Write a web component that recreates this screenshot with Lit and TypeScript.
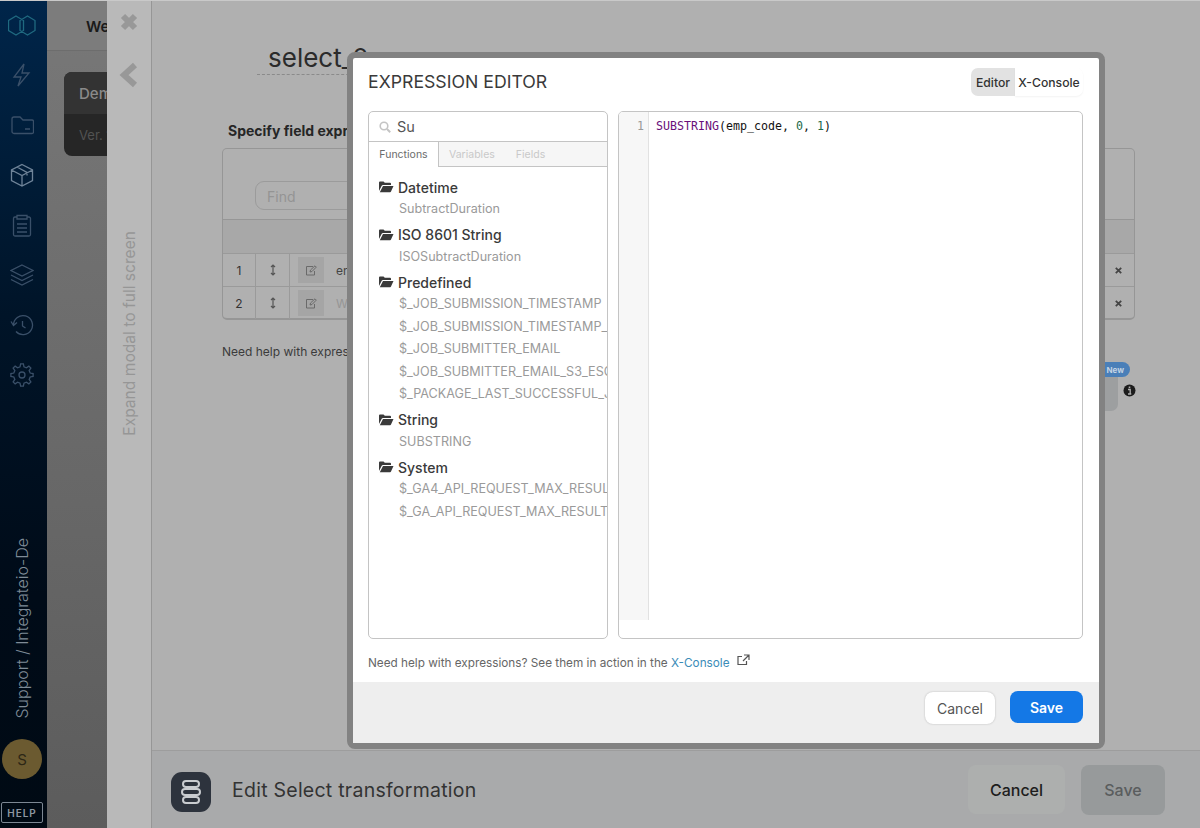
import { LitElement, html, css, svg } from "lit";
import { customElement } from "lit/decorators.js";

const groups = [
  { name: "Datetime", items: ["SubtractDuration"] },
  { name: "ISO 8601 String", items: ["ISOSubtractDuration"] },
  { name: "Predefined", items: ["$_JOB_SUBMISSION_TIMESTAMP", "$_JOB_SUBMISSION_TIMESTAMP_UTC", "$_JOB_SUBMITTER_EMAIL", "$_JOB_SUBMITTER_EMAIL_S3_ESCAPED", "$_PACKAGE_LAST_SUCCESSFUL_JOB"] },
  { name: "String", items: ["SUBSTRING"] },
  { name: "System", items: ["$_GA4_API_REQUEST_MAX_RESULTS", "$_GA_API_REQUEST_MAX_RESULTS"] },
];

function gearPath(): string {
  const pts: string[] = [];
  const teeth = 8;
  for (let i = 0; i < teeth; i++) {
    const a = (i * 2 * Math.PI) / teeth - Math.PI / 2;
    const step = (2 * Math.PI) / teeth;
    const at = (r: number, d: number) => `${(12 + r * Math.cos(a + d)).toFixed(2)} ${(12 + r * Math.sin(a + d)).toFixed(2)}`;
    pts.push(`${i === 0 ? "M" : "L"}${at(8.4, -step * 0.3)}`);
    pts.push(`L${at(11.2, -step * 0.16)}`);
    pts.push(`L${at(11.2, step * 0.16)}`);
    pts.push(`L${at(8.4, step * 0.3)}`);
  }
  return pts.join("") + "Z";
}

const navIcons = [
  svg`<path d="M8 3l7.500 4.500v10L8 22l-7.500-4.500v-10z M19.500 3 27 7.500v10L19.500 22 12 17.500v-10z" />`,
  svg`<path d="M14 1 4 14h7l-3 9 11-13h-7z" />`,
  svg`<path d="M2 6a2 2 0 0 1 2-2h6l3 3h9a1.500 1.500 0 0 1 1.500 1.500V19a1.500 1.500 0 0 1-1.500 1.500H4A2 2 0 0 1 2 18.500z M15 16h5" />`,
  svg`<path d="M12 1.500 22.500 7v10.500L12 23 1.500 17.500V7z M1.500 7 12 12.500 22.500 7 M12 12.500V23 M7 4l10 5.500v3" />`,
  svg`<path d="M7 4H5a1.500 1.500 0 0 0-1.500 1.500v16A1.500 1.500 0 0 0 5 23h14a1.500 1.500 0 0 0 1.500-1.500v-16A1.500 1.500 0 0 0 19 4h-2 M7 2.500h10V6H7z M7 11h10 M7 15h10 M7 19h10" />`,
  svg`<path d="M12 2 23 7.500 12 13 1 7.500z M1 12l11 5.500L23 12 M1 16.500 12 22l11-5.500" />`,
  svg`<path d="M3.500 12A9.500 9.500 0 1 1 6 18.500 M1 8.500l2.500 4 3.500-3 M12.500 8v5l3 2" />`,
  svg`<path d=${gearPath()} /><circle cx="12" cy="12" r="3" />`,
];

@customElement("app-root")
export class AppRoot extends LitElement {
  static styles = css`
    :host { display: block; position: relative; width: 1200px; height: 828px; overflow: hidden; font-family: Inter, "Liberation Sans", sans-serif; color: #333; background: #c9c9c9; }
    svg { display: block; }
    .shell { display: flex; height: 827px; margin-top: 1px; }
    .nav { width: 47px; flex: none; background: linear-gradient(#00254a 0%, #00203f 12%, #001428 38%, #000b18 72%, #000a14 100%); display: flex; flex-direction: column; align-items: center; padding: 12px 3px 0 0; box-sizing: border-box; }
    .nav-ic { height: 24px; margin-bottom: 26px; color: #3a5069; }
    .nav-ic svg { fill: none; stroke: currentColor; stroke-width: 1.300; }
    .nav-ic.logo { color: #1f6a80; }
    .nav-ic.box { color: #6f8499; }
    .spacer { flex: 1; }
    .org { writing-mode: vertical-rl; transform: rotate(180deg); font-size: 16px; color: #7f8b97; white-space: nowrap; margin-bottom: 21px; font-weight: 300; }
    .avatar { width: 40px; height: 40px; border-radius: 50%; background: #6b5a30; color: #2d2716; display: flex; align-items: center; justify-content: center; font-size: 15px; margin-bottom: 23px; }
    .help { width: 42px; height: 21px; box-sizing: border-box; border: 1px solid #7c8793; border-radius: 2px; color: #8d97a2; font-size: 10px; font-weight: 600; letter-spacing: 1px; display: flex; align-items: center; justify-content: center; margin-bottom: 5px; }
    .page { flex: 1; background: linear-gradient(#787878 0%, #5c5c5c 100%); }
    .topbar { height: 50px; background: #7c7c7c; border-bottom: 1px solid #6d6d6d; font-size: 15px; font-weight: 600; color: #1a1a1a; padding: 16px 0 0 39px; box-sizing: border-box; overflow: hidden; white-space: nowrap; }
    .card { margin: 21px 0 0 17px; width: 120px; height: 84px; border-radius: 8px; overflow: hidden; background: #262626; }
    .card-h { height: 42px; background: #333; color: #8a8a8a; font-size: 15px; font-weight: 500; padding: 12px 0 0 15px; box-sizing: border-box; }
    .card-b { color: #525252; font-size: 13px; padding: 13px 0 0 15px; }

    .panel { position: absolute; left: 107px; top: 1px; right: 0; bottom: 0; display: flex; background: #b0b0b0; }
    .rail { width: 45px; flex: none; box-sizing: border-box; background: #b9b9b9; border-right: 1px solid #969696; display: flex; flex-direction: column; align-items: center; color: #989898; }
    .rail-x { margin-top: 11px; }
    .rail-ch { margin-top: 30px; }
    .rail-t { writing-mode: vertical-rl; transform: rotate(180deg); font-size: 15.600px; margin-top: 143px; white-space: nowrap; color: #969696; }
    .content { flex: 1; display: flex; flex-direction: column; min-width: 0; }
    .main { flex: 1; padding: 0 65px 0 70px; }
    .name { margin: 41px 0 0 35px; width: 200px; font-size: 26px; line-height: 32px; color: #2b2b2b; white-space: nowrap; overflow: hidden; padding-left: 11px; border-bottom: 1px dashed #8a8a8a; height: 32px; }
    .spec { margin: 47px 0 0 6px; font-size: 14px; font-weight: 700; line-height: 17px; color: #262626; white-space: nowrap; }
    .table { margin-top: 9px; border: 1px solid #969696; border-bottom-width: 2px; border-radius: 5px; height: 172px; box-sizing: border-box; }
    .tools { height: 71px; border-bottom: 1px solid #969696; padding: 32px 0 0 32px; box-sizing: border-box; }
    .find { width: 200px; height: 29px; box-sizing: border-box; border: 1px solid #9b9b9b; border-radius: 9px; padding: 6px 0 0 11px; font-size: 14px; color: #949494; }
    .thead { height: 33px; background: #a8a8a8; }
    .row { height: 33px; display: flex; border-top: 1px solid #9a9a9a; box-sizing: border-box; align-items: stretch; font-size: 12px; }
    .c1 { width: 32px; display: flex; align-items: center; justify-content: center; border-right: 1px solid #9a9a9a; }
    .c2 { width: 33px; display: flex; align-items: center; justify-content: center; border-right: 1px solid #9a9a9a; color: #555; }
    .c3 { flex: 1; display: flex; align-items: center; padding-left: 8px; gap: 12px; color: #444; }
    .c3 .ghost { color: #959595; }
    .ed { width: 26px; height: 26px; background: #a5a5a5; display: flex; align-items: center; justify-content: center; color: #6a6a6a; }
    .c4 { width: 32px; border-left: 1px solid #9a9a9a; display: flex; align-items: center; justify-content: center; color: #444; }
    .needhelp { margin-top: 24px; font-size: 12px; color: #3b3b3b; line-height: 15px; white-space: nowrap; }
    .foot { height: 78px; flex: none; border-top: 1px solid #9d9d9d; background: #a9aaab; display: flex; align-items: center; padding: 0 35px 0 19px; box-sizing: border-box; }
    .foot-ic { width: 40px; height: 40px; border-radius: 11px; background: #2d333d; color: #c9ccd0; display: flex; align-items: center; justify-content: center; margin: 4px 21px 0 0; }
    .foot-t { flex: 1; font-size: 19.500px; color: #333; letter-spacing: .25px; }
    .fbtn { display: flex; align-items: center; justify-content: center; border-radius: 8px; font-size: 16px; font-weight: 500; height: 49px; box-sizing: border-box; }
    .fcancel { width: 97px; background: #adafae; color: #1d1d1d; margin-right: 16px; }
    .fsave { width: 84px; height: 50px; background: #979a9b; color: #5a5d5e; }

    .badge-wrap { position: absolute; left: 1098px; top: 362px; }
    .badge { position: absolute; left: 0; top: 0; width: 32px; height: 15px; border-radius: 8px; background: #4a7fb8; color: #c3d3e3; font-size: 8px; font-weight: 700; display: flex; align-items: center; justify-content: flex-end; padding-right: 6px; box-sizing: border-box; }
    .greybox { position: absolute; left: 0; top: 15px; width: 20px; height: 34px; border-radius: 0 0 7px 0; background: #9d9fa0; }
    .info { position: absolute; left: 25px; top: 22px; color: #1c1c1c; }

    .modal { position: absolute; left: 347px; top: 52px; width: 758px; height: 697px; box-sizing: border-box; border: 6px solid #828282; border-radius: 8px; background: #fff; display: flex; flex-direction: column; }
    .m-head { display: flex; justify-content: space-between; padding: 10px 16px 0 15px; height: 53px; box-sizing: border-box; }
    .m-title { font-size: 17.700px; line-height: 27px; color: #3a3a3a; font-weight: 400; }
    .seg { display: flex; height: 28px; font-size: 12.200px; font-weight: 500; color: #333; }
    .seg-a { width: 44px; background: #e2e2e2; border-radius: 7px 0 0 7px; display: flex; align-items: center; justify-content: center; }
    .seg-b { width: 68px; display: flex; align-items: center; justify-content: center; background: #fff; border-radius: 0 7px 7px 0; box-shadow: 0 1px 2px rgba(0,0,0,.05); }
    .m-body { display: flex; gap: 10px; padding: 0 16px 0 15px; }
    .left { width: 240px; height: 528px; box-sizing: border-box; border: 1px solid #c4c4c4; border-radius: 5px; overflow: hidden; }
    .search { height: 29px; display: flex; align-items: center; padding-left: 10px; gap: 6px; border-bottom: 1px solid #c4c4c4; font-size: 14.500px; color: #555; }
    .search svg { color: #c4c4c4; }
    .tabs { display: flex; height: 25px; background: #f6f6f6; border-bottom: 1px solid #c4c4c4; font-size: 10.500px; color: #c9c9c9; box-sizing: border-box; }
    .tab { display: flex; align-items: center; }
    .tab.on { width: 70px; justify-content: center; background: #fff; color: #6b6b6b; height: 25px; border-right: 1px solid #c4c4c4; box-sizing: border-box; }
    .tab.v { margin-left: 10px; }
    .tab.f { margin-left: 21px; }
    .tree { padding: 9px 0 0 10px; }
    .g { margin-bottom: 3px; }
    .g-h { display: flex; align-items: center; height: 22px; gap: 4px; font-size: 14px; font-weight: 500; color: #3a3a3a; white-space: nowrap; }
    .g-h svg { color: #3a3a3a; }
    .it { height: 22.500px; line-height: 22.500px; padding-left: 20px; font-size: 12.600px; color: #9a9a9a; white-space: nowrap; }
    .right { flex: 1; height: 528px; box-sizing: border-box; border: 1px solid #c4c4c4; border-radius: 5px; display: flex; overflow: hidden; align-items: flex-start; }
    .gutter { width: 30px; height: 508px; background: #f7f7f7; border-right: 1px solid #e2e2e2; font: 11.630px/15px "DejaVu Sans Mono", monospace; color: #999; text-align: right; padding: 7px 4px 0 0; box-sizing: border-box; }
    .code { font: 11.630px/15px "DejaVu Sans Mono", monospace; padding: 7px 0 0 7px; color: #111; white-space: pre; }
    .code .k { color: #6a0f7a; }
    .code .n { color: #1c6b4a; }
    .m-help { display: flex; align-items: center; height: 43px; padding: 5px 0 0 15px; box-sizing: border-box; font-size: 11.750px; color: #666; white-space: pre; }
    .m-help a { color: #3b8cb8; }
    .m-help svg { margin: -6px 0 0 7px; color: #555; }
    .m-foot { flex: 1; background: #eeeeee; display: flex; align-items: flex-start; justify-content: flex-end; padding: 9px 16px 0 0; gap: 15px; }
    .bcancel { width: 70px; height: 32px; margin-top: 1px; border-radius: 8px; background: #fff; box-shadow: 0 0 2px rgba(0,0,0,.25); display: flex; align-items: center; justify-content: center; font-size: 14px; color: #555; }
    .bsave { width: 73px; height: 32px; border-radius: 8px; background: #1478e6; color: #fff; display: flex; align-items: center; justify-content: center; font-size: 14px; font-weight: 600; }
  `;

  folder() {
    return html`<svg width="15" height="12" viewBox="0 0 15 12"><path fill="currentColor" d="M0 1.500A1 1 0 0 1 1 .5h3.500l1.300 1.300H11a1 1 0 0 1 1 1V4H4a1.500 1.500 0 0 0-1.300.8L0 10zM4 5h10.500L12 10.600a1 1 0 0 1-.9.6H.8z"/></svg>`;
  }

  cross(size: number, w: number) {
    return html`<svg width=${size} height=${size} viewBox="0 0 20 20"><path d="M4 4l12 12M16 4 4 16" stroke="currentColor" stroke-width=${w} fill="none"/></svg>`;
  }

  row(n: number, text: string, ghost: boolean) {
    return html`<div class="row">
      <div class="c1">${n}</div>
      <div class="c2"><svg width="8" height="12" viewBox="0 0 8 12"><path d="M4 1v10M2 3l2-2 2 2M2 9l2 2 2-2" stroke="currentColor" fill="none" stroke-width="1.200"/></svg></div>
      <div class="c3"><div class="ed"><svg width="12" height="11" viewBox="0 0 12 11"><path d="M8 1.500H1.500v8.500h8V6M5 7l.5-2L10 .8l1.300 1.300L7 6.500z" stroke="currentColor" fill="none"/></svg></div><span class=${ghost ? "ghost" : ""}>${text}</span></div>
      <div class="c4">${this.cross(9, 4)}</div>
    </div>`;
  }

  render() {
    const cls = ["logo", "", "", "box", "", "", "", ""];
    return html`
      <div class="shell">
        <nav class="nav">
          ${navIcons.map((p, i) => html`<div class="nav-ic ${cls[i]}"><svg width=${i === 0 ? 28 : 24} height="24" viewBox="0 0 ${i === 0 ? 28 : 24} 24">${p}</svg></div>`)}
          <div class="spacer"></div>
          <div class="org">Support / Integrateio-De</div>
          <div class="avatar">S</div>
          <div class="help">HELP</div>
        </nav>
        <div class="page">
          <div class="topbar">We</div>
          <div class="card"><div class="card-h">Dem</div><div class="card-b">Ver. 1</div></div>
        </div>
      </div>

      <div class="panel">
        <aside class="rail">
          <div class="rail-x">${this.cross(20, 6)}</div>
          <svg class="rail-ch" width="20" height="26" viewBox="0 0 20 26"><path d="M16 3 5 13l11 10" stroke="currentColor" stroke-width="6" fill="none"/></svg>
          <div class="rail-t">Expand modal to full screen</div>
        </aside>
        <div class="content">
          <div class="main">
            <div class="name">select_0</div>
            <div class="spec">Specify field expr</div>
            <div class="table">
              <div class="tools"><div class="find">Find</div></div>
              <div class="thead"></div>
              ${this.row(1, "en", false)}
              ${this.row(2, "W", true)}
            </div>
            <div class="needhelp">Need help with expres</div>
          </div>
          <footer class="foot">
            <div class="foot-ic"><svg width="22" height="26" viewBox="0 0 22 26"><g fill="none" stroke="currentColor" stroke-width="2"><rect x="3" y="2" width="16" height="6" rx="3"/><rect x="2" y="10" width="18" height="6" rx="3"/><rect x="3" y="18" width="16" height="6" rx="3"/></g></svg></div>
            <div class="foot-t">Edit Select transformation</div>
            <div class="fbtn fcancel">Cancel</div>
            <div class="fbtn fsave">Save</div>
          </footer>
        </div>
      </div>

      <div class="badge-wrap">
        <div class="greybox"></div>
        <div class="badge">New</div>
        <svg class="info" width="13" height="13" viewBox="0 0 13 13"><circle cx="6.500" cy="6.500" r="6" fill="currentColor"/><path d="M5 5.500h2.200V10H8.300M5 10h3.300" stroke="#b0b0b0" stroke-width="1.300" fill="none"/><rect x="5.700" y="2.500" width="1.600" height="1.600" fill="#b0b0b0"/></svg>
      </div>

      <div class="modal">
        <div class="m-head">
          <div class="m-title">EXPRESSION EDITOR</div>
          <div class="seg"><div class="seg-a">Editor</div><div class="seg-b">X-Console</div></div>
        </div>
        <div class="m-body">
          <div class="left">
            <div class="search">
              <svg width="12" height="12" viewBox="0 0 12 12"><circle cx="5" cy="5" r="3.800" stroke="currentColor" stroke-width="1.600" fill="none"/><path d="M8 8l3.200 3.200" stroke="currentColor" stroke-width="2"/></svg>
              <span>Su</span>
            </div>
            <div class="tabs">
              <div class="tab on">Functions</div>
              <div class="tab v">Variables</div>
              <div class="tab f">Fields</div>
            </div>
            <div class="tree">
              ${groups.map((g) => html`<div class="g">
                <div class="g-h">${this.folder()}<span>${g.name}</span></div>
                ${g.items.map((it) => html`<div class="it">${it}</div>`)}
              </div>`)}
            </div>
          </div>
          <div class="right">
            <div class="gutter">1</div>
            <div class="code"><span class="k">SUBSTRING</span>(emp_code, <span class="n">0</span>, <span class="n">1</span>)</div>
          </div>
        </div>
        <div class="m-help">Need help with expressions? See them in action in the <a>X-Console</a><svg width="13" height="12" viewBox="0 0 13 12"><path d="M9.500 7v3.500h-8.500V2.500h4M7 1h5v5M12 1 6 7" stroke="currentColor" stroke-width="1.200" fill="none"/></svg>
        </div>
        <div class="m-foot">
          <div class="bcancel">Cancel</div>
          <div class="bsave">Save</div>
        </div>
      </div>
    `;
  }
}
